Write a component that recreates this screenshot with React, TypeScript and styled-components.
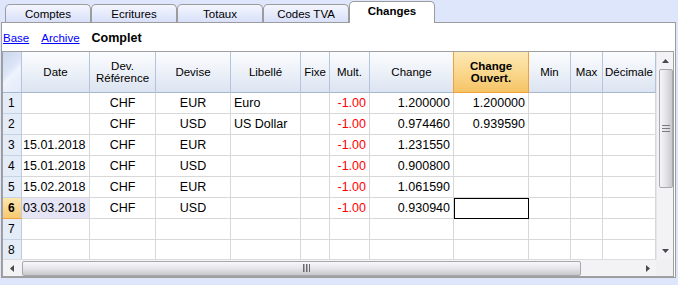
import React from 'react';
import styled, { createGlobalStyle, css } from 'styled-components';

const GlobalStyle = createGlobalStyle`
  html, body { margin: 0; padding: 0; background: #dee6fc; }
  body { font-family: "Liberation Sans", Arial, sans-serif; color: #000; }
`;

const Screen = styled.div`
  width: 678px;
  height: 285px;
  background: #dee6fc;
  overflow: hidden;
`;

const TabBar = styled.div`
  display: flex;
  align-items: flex-end;
  height: 22px;
  padding-left: 5px;
`;

const Tab = styled.div<{ $active?: boolean }>`
  box-sizing: border-box;
  width: 86px;
  height: 18px;
  border: 1px solid #9c9c9c;
  border-bottom: none;
  border-radius: 5px 5px 0 0;
  background: linear-gradient(#f4f6fe, #d8e0f9);
  font-size: 11.5px;
  display: flex;
  align-items: center;
  justify-content: center;
  padding-top: 1px;
  ${(p) =>
    p.$active &&
    css`
      height: 22px;
      margin-bottom: -1px;
      background: #fff;
      font-weight: bold;
      position: relative;
      z-index: 1;
      padding-top: 0;
      padding-bottom: 3px;
    `}
`;

const Panel = styled.div`
  box-sizing: border-box;
  margin-left: 1px;
  width: 675px;
  height: 256px;
  border: 1px solid #9c9c9c;
  background: #fff;
  display: flex;
  flex-direction: column;
`;

const LinksRow = styled.div`
  height: 28px;
  display: flex;
  align-items: center;
  gap: 12px;
  padding: 2px 0 0 1px;
  box-sizing: border-box;
  font-size: 11.5px;
`;

const Link = styled.a`
  color: #0000ff;
  text-decoration: underline;
  cursor: pointer;
`;

const Current = styled.span`
  font-weight: bold;
  font-size: 12.5px;
`;

const GridFrame = styled.div`
  box-sizing: border-box;
  width: 672px;
  height: 226px;
  border: 1px solid #a0a0a0;
  display: grid;
  grid-template-columns: 1fr 17px;
  grid-template-rows: 1fr 17px;
`;

const Viewport = styled.div`
  overflow: hidden;
`;

const Table = styled.div`
  display: grid;
  grid-template-columns: 19px 68px 66px 75px 70px 29px 40px 84px 75px 42px 32px 53px;
  grid-template-rows: 41px;
  grid-auto-rows: 21px;
`;

const HeadCell = styled.div<{ $current?: boolean }>`
  box-sizing: border-box;
  border-right: 1px solid #b4c4da;
  border-bottom: 1px solid #a5b8d0;
  background: linear-gradient(#fbfcfe 0%, #eef2f9 45%, #dbe4f1 100%);
  display: flex;
  align-items: center;
  justify-content: center;
  text-align: center;
  font-size: 11.5px;
  line-height: 12px;
  white-space: nowrap;
  overflow: hidden;
  ${(p) =>
    p.$current &&
    css`
      background: linear-gradient(#fde9b6 0%, #fad88e 50%, #f5c466 100%);
      border-right-color: #efa23c;
      border-left: 1px solid #efa23c;
      margin-left: -1px;
      border-bottom-color: #efa23c;
      font-weight: bold;
    `}
`;

const CornerHead = styled.div`
  box-sizing: border-box;
  border-right: 1px solid #b4c4da;
  border-bottom: 1px solid #a5b8d0;
  background: linear-gradient(135deg, #c9d6ee 0%, #dfe7f8 45%, #eef3fc 55%, #e3eaf8 100%);
`;

const RowNum = styled.div<{ $current?: boolean }>`
  box-sizing: border-box;
  border-right: 1px solid #bccbe0;
  border-bottom: 1px solid #c5d3e6;
  background: #e4ecf8;
  font-size: 12px;
  display: flex;
  align-items: center;
  padding-left: 5px;
  ${(p) =>
    p.$current &&
    css`
      background: linear-gradient(#fde6ad, #f7c870);
      border-bottom-color: #efa23c;
      font-weight: bold;
    `}
`;

type Align = 'left' | 'center' | 'right';

const Cell = styled.div<{ $align?: Align; $red?: boolean; $tint?: boolean; $selected?: boolean; $pad?: number }>`
  box-sizing: border-box;
  border-right: 1px solid #d8d8d8;
  border-bottom: 1px solid #d8d8d8;
  font-size: 12.5px;
  display: flex;
  align-items: center;
  white-space: nowrap;
  overflow: hidden;
  padding: 0 ${(p) => (p.$pad ?? 3)}px;
  justify-content: ${(p) =>
    p.$align === 'center' ? 'center' : p.$align === 'right' ? 'flex-end' : 'flex-start'};
  color: ${(p) => (p.$red ? '#ff0000' : '#000')};
  background: ${(p) => (p.$tint ? '#e5e5f5' : '#fff')};
  ${(p) =>
    p.$selected &&
    css`
      outline: 1px solid #000;
      outline-offset: -1px;
    `}
`;

const VScroll = styled.div`
  background: #f3f2f5;
  border-left: 1px solid #e6e6ea;
  display: flex;
  flex-direction: column;
  align-items: center;
`;

const ArrowBox = styled.div<{ $h?: number; $w?: number }>`
  height: ${(p) => p.$h ?? 17}px;
  width: ${(p) => p.$w ?? 16}px;
  flex: none;
  display: flex;
  align-items: center;
  justify-content: center;
`;

const VThumb = styled.div`
  box-sizing: border-box;
  width: 14px;
  height: 119px;
  margin-left: 1px;
  border: 1px solid #a8a8ac;
  border-radius: 2px;
  background: linear-gradient(to right, #f6f6f8 0%, #e4e4e8 50%, #c8c8cd 100%);
  display: flex;
  align-items: center;
  justify-content: center;
`;

const Track = styled.div`
  flex: 1;
`;

const HScroll = styled.div`
  background: #f3f2f5;
  border-top: 1px solid #dcdce0;
  display: flex;
  align-items: center;
`;

const HThumb = styled.div`
  box-sizing: border-box;
  width: 559px;
  height: 15px;
  margin-left: 2px;
  border: 1px solid #a8a8ac;
  border-radius: 2px;
  background: linear-gradient(#f8f7fa 0%, #e6e5ea 50%, #c6c6cb 100%);
  display: flex;
  align-items: center;
  justify-content: center;
  padding-left: 10px;
`;

const Corner = styled.div`
  background: #f0eff2;
`;

type Row = {
  n: number;
  date?: string;
  dev?: string;
  devise?: string;
  lib?: string;
  mult?: string;
  chg?: string;
  ouv?: string;
};

const rows: Row[] = [
  { n: 1, dev: 'CHF', devise: 'EUR', lib: 'Euro', mult: '-1.00', chg: '1.200000', ouv: '1.200000' },
  { n: 2, dev: 'CHF', devise: 'USD', lib: 'US Dollar', mult: '-1.00', chg: '0.974460', ouv: '0.939590' },
  { n: 3, date: '15.01.2018', dev: 'CHF', devise: 'EUR', mult: '-1.00', chg: '1.231550' },
  { n: 4, date: '15.01.2018', dev: 'CHF', devise: 'USD', mult: '-1.00', chg: '0.900800' },
  { n: 5, date: '15.02.2018', dev: 'CHF', devise: 'EUR', mult: '-1.00', chg: '1.061590' },
  { n: 6, date: '03.03.2018', dev: 'CHF', devise: 'USD', mult: '-1.00', chg: '0.930940' },
  { n: 7 },
  { n: 8 },
];

const CURRENT = 6;

const Tri = ({ dir }: { dir: 'up' | 'down' | 'left' | 'right' }) => {
  const pts =
    dir === 'up'
      ? '0,4 3.5,0 7,4'
      : dir === 'down'
      ? '0,0 7,0 3.5,4'
      : dir === 'left'
      ? '4,0 4,7 0,3.5'
      : '0,0 0,7 4,3.5';
  const w = dir === 'up' || dir === 'down' ? 7 : 4;
  const h = dir === 'up' || dir === 'down' ? 4 : 7;
  return (
    <svg width={w} height={h} viewBox={`0 0 ${w} ${h}`}>
      <polygon points={pts} fill="#4a4a4e" />
    </svg>
  );
};

const VGrip = () => (
  <svg width="8" height="7" viewBox="0 0 8 7">
    <rect x="0" y="0" width="8" height="1" fill="#7a7a80" />
    <rect x="0" y="3" width="8" height="1" fill="#7a7a80" />
    <rect x="0" y="6" width="8" height="1" fill="#7a7a80" />
  </svg>
);

const HGrip = () => (
  <svg width="7" height="8" viewBox="0 0 7 8">
    <rect x="0" y="0" width="1.5" height="8" fill="#6a6a70" />
    <rect x="3" y="0" width="1.5" height="8" fill="#6a6a70" />
    <rect x="6" y="0" width="1" height="8" fill="#6a6a70" />
  </svg>
);

export default function App() {
  return (
    <Screen>
      <GlobalStyle />
      <TabBar>
        <Tab>Comptes</Tab>
        <Tab>Ecritures</Tab>
        <Tab>Totaux</Tab>
        <Tab>Codes TVA</Tab>
        <Tab $active>Changes</Tab>
      </TabBar>
      <Panel>
        <LinksRow>
          <Link>Base</Link>
          <Link>Archive</Link>
          <Current>Complet</Current>
        </LinksRow>
        <GridFrame>
          <Viewport>
            <Table>
              <CornerHead />
              <HeadCell>Date</HeadCell>
              <HeadCell>
                Dev.
                <br />
                Référence
              </HeadCell>
              <HeadCell>Devise</HeadCell>
              <HeadCell>Libellé</HeadCell>
              <HeadCell>Fixe</HeadCell>
              <HeadCell>Mult.</HeadCell>
              <HeadCell>Change</HeadCell>
              <HeadCell $current>
                Change
                <br />
                Ouvert.
              </HeadCell>
              <HeadCell>Min</HeadCell>
              <HeadCell>Max</HeadCell>
              <HeadCell>Décimale</HeadCell>
              {rows.map((r) => {
                const cur = r.n === CURRENT;
                return (
                  <React.Fragment key={r.n}>
                    <RowNum $current={cur}>{r.n}</RowNum>
                    <Cell $pad={1} $tint={cur}>{r.date}</Cell>
                    <Cell $align="center">{r.dev}</Cell>
                    <Cell $align="center">{r.devise}</Cell>
                    <Cell>{r.lib}</Cell>
                    <Cell />
                    <Cell $align="right" $red>{r.mult}</Cell>
                    <Cell $align="right">{r.chg}</Cell>
                    <Cell $align="right" $selected={cur}>{r.ouv}</Cell>
                    <Cell />
                    <Cell />
                    <Cell />
                  </React.Fragment>
                );
              })}
            </Table>
          </Viewport>
          <VScroll>
            <ArrowBox $h={17}>
              <Tri dir="up" />
            </ArrowBox>
            <VThumb>
              <VGrip />
            </VThumb>
            <Track />
            <ArrowBox $h={17}>
              <Tri dir="down" />
            </ArrowBox>
          </VScroll>
          <HScroll>
            <ArrowBox $w={17} $h={15}>
              <Tri dir="left" />
            </ArrowBox>
            <HThumb>
              <HGrip />
            </HThumb>
            <Track />
            <ArrowBox $w={17} $h={15}>
              <Tri dir="right" />
            </ArrowBox>
          </HScroll>
          <Corner />
        </GridFrame>
      </Panel>
    </Screen>
  );
}
